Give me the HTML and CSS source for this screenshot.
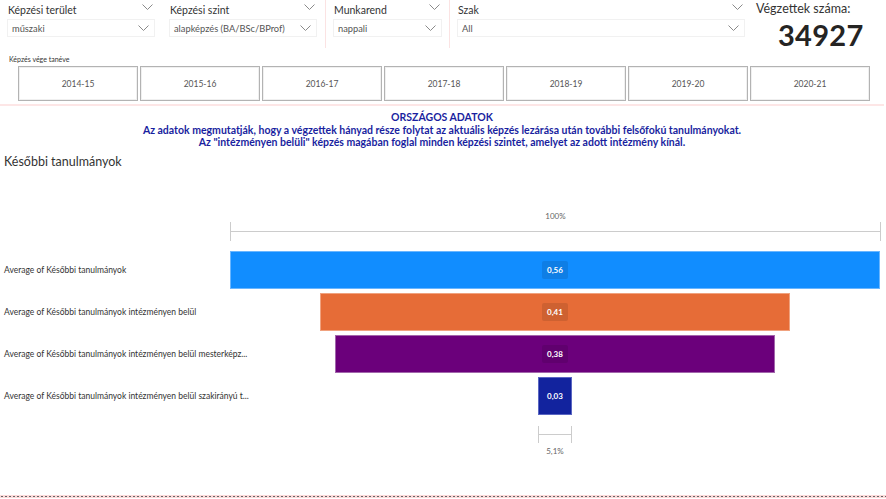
FILE: index.html
```html
<!DOCTYPE html>
<html lang="hu">
<head>
<meta charset="utf-8">
<link rel="stylesheet" href="styles.css">
</head>
<body>
<div class="page">
  <header class="filters">
    <div class="slicer s1">
      <div class="slicer-head"><span>Képzési terület</span><svg class="chev" viewBox="0 0 11 6"><polyline points="0.5,0.5 5.5,5.5 10.5,0.5"/></svg></div>
      <div class="dropdown"><span>műszaki</span><svg class="chev" viewBox="0 0 11 6"><polyline points="0.5,0.5 5.5,5.5 10.5,0.5"/></svg></div>
    </div>
    <div class="slicer s2">
      <div class="slicer-head"><span>Képzési szint</span><svg class="chev" viewBox="0 0 11 6"><polyline points="0.5,0.5 5.5,5.5 10.5,0.5"/></svg></div>
      <div class="dropdown"><span>alapképzés (BA/BSc/BProf)</span><svg class="chev" viewBox="0 0 11 6"><polyline points="0.5,0.5 5.5,5.5 10.5,0.5"/></svg></div>
    </div>
    <div class="sep"></div>
    <div class="slicer s3">
      <div class="slicer-head"><span>Munkarend</span><svg class="chev" viewBox="0 0 11 6"><polyline points="0.5,0.5 5.5,5.5 10.5,0.5"/></svg></div>
      <div class="dropdown"><span>nappali</span><svg class="chev" viewBox="0 0 11 6"><polyline points="0.5,0.5 5.5,5.5 10.5,0.5"/></svg></div>
    </div>
    <div class="sep"></div>
    <div class="slicer s4">
      <div class="slicer-head"><span>Szak</span><svg class="chev" viewBox="0 0 11 6"><polyline points="0.5,0.5 5.5,5.5 10.5,0.5"/></svg></div>
      <div class="dropdown"><span>All</span><svg class="chev" viewBox="0 0 11 6"><polyline points="0.5,0.5 5.5,5.5 10.5,0.5"/></svg></div>
    </div>
    <div class="kpi">
      <div class="kpi-label">Végzettek száma:</div>
      <div class="kpi-value">34927</div>
    </div>
  </header>

  <section class="years">
    <div class="years-label">Képzés vége tanéve</div>
    <div class="year-buttons">
      <div class="year">2014-15</div>
      <div class="year">2015-16</div>
      <div class="year">2016-17</div>
      <div class="year">2017-18</div>
      <div class="year">2018-19</div>
      <div class="year">2019-20</div>
      <div class="year">2020-21</div>
    </div>
  </section>

  <section class="intro">
    <div class="intro-title">ORSZÁGOS ADATOK</div>
    <div>Az adatok megmutatják, hogy a végzettek hányad része folytat az aktuális képzés lezárása után további felsőfokú tanulmányokat.</div>
    <div>Az "intézményen belüli" képzés magában foglal minden képzési szintet, amelyet az adott intézmény kínál.</div>
  </section>

  <section class="chart">
    <h2 class="chart-title">Későbbi tanulmányok</h2>
    <div class="funnel">
      <div class="axis-row">
        <div class="axis-text">100%</div>
        <div class="axis-line"></div>
      </div>
      <div class="row">
        <div class="cat">Average of Későbbi tanulmányok</div>
        <div class="plot"><div class="bar blue" style="width:650px"><span class="val">0,56</span></div></div>
      </div>
      <div class="row">
        <div class="cat">Average of Későbbi tanulmányok intézményen belül</div>
        <div class="plot"><div class="bar orange" style="width:470px"><span class="val">0,41</span></div></div>
      </div>
      <div class="row">
        <div class="cat">Average of Későbbi tanulmányok intézményen belül mesterképz...</div>
        <div class="plot"><div class="bar purple" style="width:440px"><span class="val">0,38</span></div></div>
      </div>
      <div class="row">
        <div class="cat">Average of Későbbi tanulmányok intézményen belül szakirányú t...</div>
        <div class="plot"><div class="bar navy" style="width:34px"><span class="val">0,03</span></div></div>
      </div>
      <div class="bottom-row">
        <div class="bracket"></div>
        <div class="bracket-text">5,1%</div>
      </div>
    </div>
  </section>
  <div class="footer-line"></div>
</div>
</body>
</html>
```

FILE: styles.css
```css
* { box-sizing: border-box; }
html, body { margin: 0; padding: 0; background: #fff; }
body {
  font-family: Lato, "Open Sans", "Liberation Sans", sans-serif;
  color: #252423;
  width: 886px;
  height: 499px;
  overflow: hidden;
}
.page { position: relative; width: 886px; height: 499px; display: flex; flex-direction: column; }

/* filters */
.filters { display: flex; height: 50px; padding-left: 7px; }
.slicer { display: flex; flex-direction: column; }
.s1 { width: 148px; }
.s2 { width: 148px; margin-left: 14px; }
.s3 { width: 109px; }
.s4 { width: 288px; }
.sep { width: 1px; height: 48px; background: #fbe3e3; margin: 0 7px 0 7px; }
.s2 + .sep { margin-left: 8px; }
.slicer-head {
  height: 19px; display: flex; align-items: center; justify-content: space-between;
  font-size: 10.5px; color: #333; padding: 0 2px 0 1px;
}
.slicer-head .chev { margin-top: -6px; }
.chev { width: 11px; height: 6px; fill: none; stroke: #8a8a8a; stroke-width: 1; flex: none; }
.dropdown {
  height: 18px; display: flex; align-items: center; justify-content: space-between;
  border: 1px solid #f1f1f1; padding: 0 5px 0 4px; font-size: 9.3px; color: #555;
  white-space: nowrap;
}
.kpi { margin-left: 11px; display: flex; flex-direction: column; width: 125px; }
.kpi-label { font-size: 12.5px; color: #333; margin-top: 1px; white-space: nowrap; }
.kpi-value { font-size: 29px; font-weight: 700; color: #252423; line-height: 30px; margin-top: 4px; margin-left: 22px; letter-spacing: 0.3px; white-space: nowrap; }

/* years */
.years { display: flex; flex-direction: column; padding-left: 9px; margin-top: 4px; }
.years-label { font-size: 7px; color: #333; height: 12px; line-height: 10px; }
.year-buttons { display: flex; gap: 2px; margin-left: 9px; }
.year {
  width: 120px; height: 35px; border: 1px solid #b3b3b3;
  box-shadow: inset 0 0 0 1px #f0f0f0;
  display: flex; align-items: center; justify-content: center;
  font-size: 8.5px; color: #555;
}
.intro {
  margin-top: 3px; border-top: 2px solid #fde6e6; padding-top: 5px;
  text-align: center; font-size: 10.5px; font-weight: 700; color: #1a1fa0; line-height: 12.5px;
  width: 884px;
}
.intro-title { color: #1a1fa0; }

/* chart */
.chart { display: flex; flex-direction: column; }
.chart-title { margin: 5px 0 0 4px; font-size: 12.5px; font-weight: 400; color: #333; line-height: 15px; }
.funnel { margin-top: 42px; display: flex; flex-direction: column; }
.axis-row { margin-left: 230px; width: 651px; display: flex; flex-direction: column; align-items: center; }
.axis-text { font-size: 8px; color: #666; line-height: 10px; }
.axis-line {
  margin-top: 1px; width: 651px; height: 19px;
  border-left: 1px solid #ccc; border-right: 1px solid #ccc;
  background: linear-gradient(#ccc, #ccc) center / 100% 1px no-repeat;
}
.row { display: flex; align-items: center; height: 42px; }
.axis-row + .row { margin-top: 8px; }
.cat { width: 230px; padding-left: 4px; font-size: 8.5px; color: #333; white-space: nowrap; }
.plot { width: 650px; display: flex; justify-content: center; }
.bar { height: 38px; display: flex; align-items: center; justify-content: center; }
.blue { background: #118dff; border: 1px solid #6ab6ff; }
.orange { background: #e66c37; border: 1px solid #f0a27f; }
.purple { background: #6b007b; border: 1px solid #a266ac; }
.navy { background: #12239e; border: 1px solid #5a66c2; }
.val {
  font-size: 8px; font-weight: 700; color: #fff; padding: 4px 5px; border-radius: 2px;
  background: rgba(0,0,0,0.1);
}
.navy .val { background: transparent; }
.bottom-row { margin-left: 230px; width: 650px; display: flex; flex-direction: column; align-items: center; margin-top: 9px; }
.bracket {
  width: 34px; height: 17px; border-left: 1px solid #ccc; border-right: 1px solid #ccc;
  background: linear-gradient(#ccc, #ccc) center / 100% 1px no-repeat;
}
.bracket-text { font-size: 8px; color: #666; margin-top: 3px; }
.footer-line {
  position: absolute; left: 0; bottom: 1px; width: 886px; height: 3px;
  background: #fcd9d9;
  background-image: radial-gradient(#666 0.9px, transparent 1.1px);
  background-size: 4px 3px;
  background-position: 0 0;
}
```
